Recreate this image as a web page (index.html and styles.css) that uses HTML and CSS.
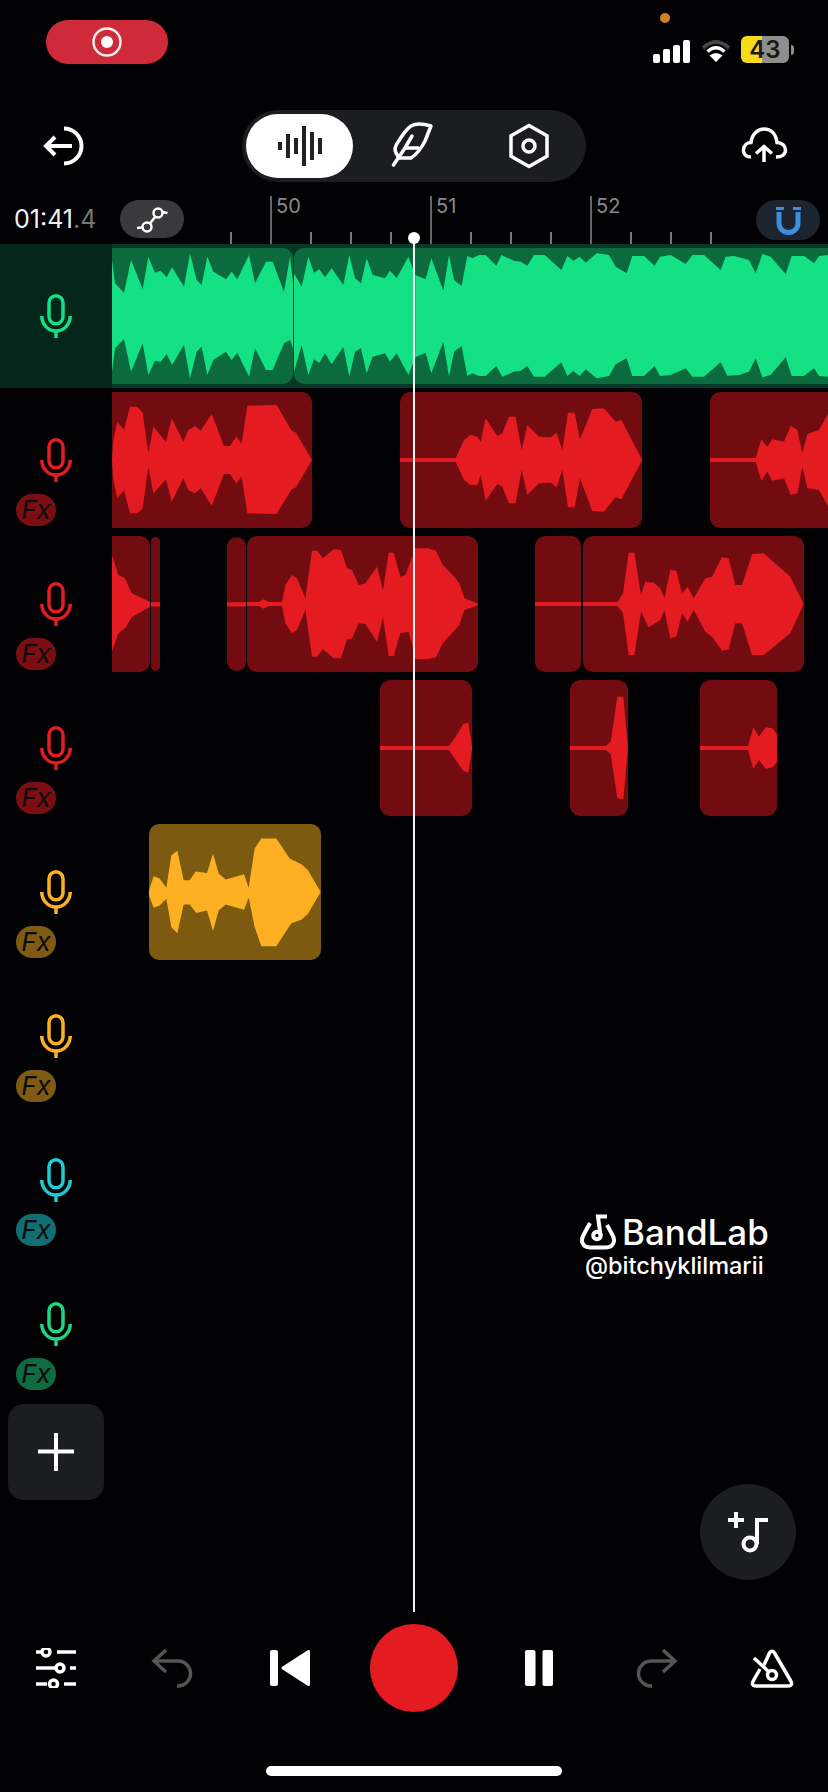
FILE: index.html
```html
<!DOCTYPE html>
<html lang="en">
<head>
  <meta charset="UTF-8">
  <title>BandLab Studio</title>
  <meta name="viewport" content="width=device-width, initial-scale=1">
  <link rel="stylesheet" href="styles.css">
</head>
<body>
  <svg class="defs" width="0" height="0">
    <symbol id="mic" viewBox="0 0 32 44">
      <rect x="9" y="1.75" width="14" height="28" rx="7" fill="none" stroke="currentColor" stroke-width="3.5"/>
      <path d="M1.75 22a14.25 15 0 0 0 28.5 0M16 37v7" fill="none" stroke="currentColor" stroke-width="3.5"/>
    </symbol>
    <symbol id="undo" viewBox="0 0 46 42">
      <path d="M16 3 4 14l12 11M4 14h24a12.5 12.5 0 0 1 0 25h-1" fill="none" stroke="currentColor" stroke-width="3.5"/>
    </symbol>
  </svg>

  <div class="app">
    <!-- status bar -->
    <div class="statusbar">
      <div class="rec-pill">
        <svg width="32" height="32" viewBox="0 0 32 32"><circle cx="16" cy="16" r="13.5" fill="none" stroke="#fbeeee" stroke-width="2.5"/><circle cx="16" cy="16" r="6" fill="#fff"/></svg>
      </div>
      <span class="cam-dot"></span>
      <div class="status-right">
        <div class="signal"><i class="s1"></i><i class="s2"></i><i class="s3"></i><i class="s4"></i></div>
        <svg class="wifi" width="32" height="26" viewBox="0 0 32 26">
          <path d="M3 11Q16-1 29 11" fill="none" stroke="#444" stroke-width="4"/>
          <path d="M7.5 14.5Q16 7 24.5 14.5" fill="none" stroke="#fff" stroke-width="3.5"/>
          <path d="M16 25 9.5 18.5Q16 13.5 22.5 18.5z" fill="#fff"/>
        </svg>
        <div class="battery"><span>43</span></div>
        <span class="battery-nub"></span>
      </div>
    </div>

    <!-- top toolbar -->
    <div class="toolbar">
      <svg width="44" height="44" viewBox="0 0 44 44" fill="none" stroke="#fff" stroke-width="4">
        <path d="M22 4.5a17.5 17.5 0 0 1 0 35M30 22H4M13 13l-9 9 9 9"/>
      </svg>
      <div class="seg">
        <div class="seg-item active">
          <svg width="44" height="40" viewBox="0 0 44 40" fill="#222">
            <rect x="0" y="16" width="4" height="8"/><rect x="8" y="8" width="4" height="24"/><rect x="16" y="12" width="4" height="16"/><rect x="24" y="0" width="4" height="40"/><rect x="32" y="6" width="4" height="28"/><rect x="40" y="12" width="4" height="16"/>
          </svg>
        </div>
        <div class="seg-item">
          <svg width="70" height="70" viewBox="0 0 70 70" fill="none" stroke="#fff" stroke-width="3.5" stroke-linecap="round" stroke-linejoin="round">
            <path d="M53 15C46 13 38 12 33 15 28 18 24 25 20 31 17 35 16 38 18 42L21 47H33C38 44 44 36 47 30Z"/>
            <path d="M15.5 54 27 37 34 25M27 37H40"/>
          </svg>
        </div>
        <div class="seg-item">
          <svg width="48" height="48" viewBox="0 0 48 48" fill="none" stroke="#fff" stroke-width="3.5">
            <path d="M24 3.5 42 13.8V34.2L24 44.5 6 34.2V13.8Z"/><circle cx="24" cy="24" r="6"/>
          </svg>
        </div>
      </div>
      <svg class="cloud" width="48" height="44" viewBox="0 0 48 44" fill="none" stroke="#fff" stroke-width="3.5">
        <path d="M11 33C5.5 33 3 29 3.5 25.5 4 21 7.5 18.5 11 18.5 12 10 18 5 24 5 31 5 36 10 37 18.5 42 18.5 45.5 22 45.5 26 45.5 30 42 33 36 33"/>
        <path d="M24 38V23M16 29.5l8-7 8 7"/>
      </svg>
    </div>

    <!-- time + ruler -->
    <div class="timebar">
      <div class="time">01:41<span>.4</span></div>
      <div class="pill auto">
        <svg width="64" height="38" viewBox="0 0 64 38" fill="none" stroke="#fff" stroke-width="2.5">
          <circle cx="38" cy="13" r="4.5"/><circle cx="27" cy="27" r="4.5"/><path d="M30 23.5l5-6.500M17 28l5.500-.5M42.500 12l5 1"/>
        </svg>
      </div>
      <div class="ruler">
        <div class="bar-mark"><span>50</span></div>
        <div class="bar-mark"><span>51</span></div>
        <div class="bar-mark last"><span>52</span></div>
      </div>
      <div class="pill magnet">
        <svg width="64" height="40" viewBox="0 0 64 40" fill="#3b8fe0">
          <rect x="20" y="7" width="8" height="3"/><rect x="37" y="7" width="8" height="3"/>
          <path d="M23 12v11a9.5 9.5 0 0 0 19 0V12" fill="none" stroke="#3b8fe0" stroke-width="5"/>
        </svg>
      </div>
    </div>

    <!-- tracks -->
    <div class="tracks">
      <div class="track armed t-green">
        <div class="head"><svg class="mic"><use href="#mic"/></svg></div>
        <div class="lane">
          <div class="clip cut-l" style="left:0;width:181px">
            <svg viewBox="336 24 543 408" preserveAspectRatio="none"><polygon points="336,60 345,130 372,158 393,60 428,148 445,50 465,98 482,92 500,112 516,82 552,140 570,40 590,120 605,135 622,50 640,95 678,118 695,95 712,118 747,45 765,130 798,65 818,65 852,155 870,50 879,130 879,325 870,300 852,310 818,390 798,390 765,325 747,410 712,338 695,360 678,335 640,360 622,405 605,320 590,335 570,415 552,315 516,375 500,342 482,365 465,362 445,405 428,310 393,395 372,297 345,325 336,395"/></svg>
          </div>
          <div class="clip cut-r" style="left:182px;width:534px">
            <svg viewBox="882 24 1602 408" preserveAspectRatio="none">
              <polygon points="882,100 905,140 925,50 942,98 958,88 975,112 995,85 1030,135 1048,45 1065,115 1083,130 1100,55 1118,105 1155,115 1170,92 1190,115 1225,50 1246,105 1246,352 1225,405 1190,340 1170,365 1155,340 1118,350 1100,400 1083,325 1065,335 1048,410 1030,320 995,372 975,340 958,368 942,358 925,405 905,315 882,395"/>
              <polygon transform="translate(1242 0)" points="4,105 35,118 52,55 88,152 105,45 120,120 143,138 160,48 175,55 195,45 215,45 247,77 262,45 300,62 320,65 340,77 360,45 392,45 442,90 460,48 478,62 497,50 515,68 548,40 585,45 605,80 638,100 655,48 690,48 722,77 738,50 770,45 815,72 835,45 870,45 920,90 935,50 960,48 1005,60 1025,100 1045,42 1070,50 1115,102 1133,48 1170,48 1200,70 1215,48 1242,45 1242,410 1215,408 1200,385 1170,408 1133,408 1115,352 1070,405 1045,412 1025,355 1005,395 975,405 940,407 920,367 870,410 835,410 815,385 770,405 738,408 722,378 690,408 655,408 638,355 605,373 585,408 548,415 515,388 497,408 478,393 460,408 442,367 392,410 360,410 340,378 320,392 300,395 265,410 247,378 215,408 195,408 175,400 160,408 143,318 120,335 105,410 88,305 52,400 35,338 4,352"/>
            </svg>
          </div>
        </div>
      </div>

      <div class="track t-red">
        <div class="head"><svg class="mic"><use href="#mic"/></svg><span class="fx">Fx</span></div>
        <div class="lane">
          <div class="clip cut-l" style="left:0;width:200px">
            <svg viewBox="336 456 600 408" preserveAspectRatio="none"><polygon points="336,660 340,600 352,545 372,570 390,500 412,500 428,518 445,640 460,560 498,605 515,535 550,605 565,570 585,558 602,572 635,522 672,618 690,618 708,590 725,610 742,497 830,495 875,572 888,578 936,660 888,742 875,748 830,822 742,820 725,710 708,730 690,702 672,702 635,797 602,745 585,760 565,750 550,715 515,785 498,718 460,760 445,680 428,805 412,820 390,820 372,750 352,775 340,720"/></svg>
          </div>
          <div class="clip" style="left:288px;width:242.3px">
            <svg viewBox="-42 456 727 408" preserveAspectRatio="none"><polygon points="-42,654 125,654 150,600 170,585 190,590 200,605 215,535 250,588 265,580 285,530 305,530 323,630 340,555 375,590 410,592 428,578 445,630 462,518 482,518 498,598 535,507 570,505 605,545 622,540 685,660 622,778 605,772 570,815 535,813 498,715 482,802 462,802 445,690 428,742 410,728 375,730 340,765 323,690 305,790 285,790 265,740 250,732 215,782 200,705 190,735 170,735 150,720 125,666 -42,666"/></svg>
          </div>
          <div class="clip" style="left:598px;width:160px">
            <svg viewBox="888 456 480 408" preserveAspectRatio="none"><polygon points="888,654 1025,654 1042,598 1060,620 1075,598 1110,605 1130,557 1150,570 1165,640 1180,582 1215,570 1240,525 1300,525 1300,795 1240,795 1215,750 1180,745 1165,680 1150,760 1130,765 1110,715 1075,722 1060,695 1042,722 1025,666 888,666"/></svg>
          </div>
        </div>
      </div>

      <div class="track t-red">
        <div class="head"><svg class="mic"><use href="#mic"/></svg><span class="fx">Fx</span></div>
        <div class="lane">
          <div class="clip cut-l" style="left:0;width:38px">
            <svg viewBox="336 18 114 408" preserveAspectRatio="none"><polygon points="336,75 355,135 375,145 395,190 450,215 450,230 395,262 375,295 355,310 336,365"/></svg>
          </div>
          <div class="clip sliver" style="left:39px;width:9.3px">
            <svg viewBox="452 26 28 390" preserveAspectRatio="none"><polygon points="452,216 480,216 480,228 452,228"/></svg>
          </div>
          <div class="clip sliver" style="left:115px;width:19px">
            <svg viewBox="681 26 57 390" preserveAspectRatio="none"><polygon points="681,216 738,216 738,228 681,228"/></svg>
          </div>
          <div class="clip" style="left:135px;width:230.7px">
            <svg viewBox="740 18 692 408" preserveAspectRatio="none">
              <polygon points="740,216 775,216 790,208 805,216 845,216 855,165 875,135 890,145 915,205 935,62 950,62 968,85 1000,58 1022,60 1040,115 1055,120 1075,165 1095,160 1130,110 1148,180 1165,68 1180,68 1200,140 1215,135 1246,55 1246,388 1225,305 1200,310 1180,378 1165,378 1148,262 1130,335 1095,282 1075,280 1055,325 1040,328 1022,385 1000,385 968,358 950,380 935,380 915,240 890,300 875,310 855,280 845,228 805,228 790,236 775,228 740,228"/>
              <polygon transform="translate(1242 0)" points="0,55 40,55 65,62 85,105 120,140 135,160 150,205 190,220 190,226 150,240 135,285 85,340 65,382 40,388 0,388"/>
            </svg>
          </div>
          <div class="clip" style="left:423.3px;width:46px">
            <svg viewBox="364 18 138 408" preserveAspectRatio="none"><polygon points="364,216 502,216 502,228 364,228"/></svg>
          </div>
          <div class="clip" style="left:471.3px;width:220.7px">
            <svg viewBox="508 18 662 408" preserveAspectRatio="none"><polygon points="508,216 612,216 628,190 645,68 662,68 682,195 695,155 720,158 740,175 752,205 770,120 788,122 805,190 822,170 840,205 875,145 895,140 925,82 945,85 965,165 985,165 1015,72 1050,70 1130,140 1170,222 1130,310 1050,375 1015,375 985,280 965,280 945,358 925,362 895,320 875,305 840,240 822,275 805,250 788,320 770,325 752,240 740,270 705,292 682,245 662,375 645,375 628,250 612,228 508,228"/></svg>
          </div>
        </div>
      </div>

      <div class="track t-red">
        <div class="head"><svg class="mic"><use href="#mic"/></svg><span class="fx">Fx</span></div>
        <div class="lane">
          <div class="clip" style="left:268px;width:92.3px">
            <svg viewBox="1140 450 277 408" preserveAspectRatio="none"><polygon points="1140,648 1347,648 1367,620 1390,582 1405,578 1417,654 1405,728 1390,722 1367,690 1347,660 1140,660"/></svg>
          </div>
          <div class="clip" style="left:458px;width:58px">
            <svg viewBox="468 450 174 408" preserveAspectRatio="none"><polygon points="468,648 575,648 590,635 610,500 628,500 642,654 628,808 610,805 590,672 575,660 468,660"/></svg>
          </div>
          <div class="clip" style="left:588px;width:77.3px">
            <svg viewBox="858 450 232 408" preserveAspectRatio="none"><polygon points="858,648 1002,648 1018,592 1035,620 1055,592 1075,595 1090,615 1090,695 1075,712 1055,717 1035,690 1018,717 1002,660 858,660"/></svg>
          </div>
        </div>
      </div>

      <div class="track t-amber">
        <div class="head"><svg class="mic"><use href="#mic"/></svg><span class="fx">Fx</span></div>
        <div class="lane">
          <div class="clip" style="left:37.3px;width:171.7px">
            <svg viewBox="448 42 515 406" preserveAspectRatio="none"><polygon points="448,240 462,198 480,205 500,232 515,135 533,122 552,210 570,210 588,184 622,188 640,130 657,190 678,208 733,192 747,232 765,115 785,85 830,85 870,145 905,162 925,180 963,245 925,310 905,328 875,338 830,407 785,407 765,350 747,262 733,298 678,282 657,300 640,362 622,300 590,308 570,282 552,282 533,368 515,350 500,265 480,285 462,292 448,255"/></svg>
          </div>
        </div>
      </div>

      <div class="track t-amber">
        <div class="head"><svg class="mic"><use href="#mic"/></svg><span class="fx">Fx</span></div>
        <div class="lane"></div>
      </div>
      <div class="track t-teal">
        <div class="head"><svg class="mic"><use href="#mic"/></svg><span class="fx">Fx</span></div>
        <div class="lane"></div>
      </div>
      <div class="track t-mint">
        <div class="head"><svg class="mic"><use href="#mic"/></svg><span class="fx">Fx</span></div>
        <div class="lane"></div>
      </div>
    </div>

    <div class="add-track">
      <svg width="36" height="38" viewBox="0 0 36 38" stroke="#fff" stroke-width="4"><path d="M18 0v38M0 18.5h36"/></svg>
    </div>

    <!-- transport -->
    <div class="transport">
      <svg width="40" height="40" viewBox="0 0 40 40" fill="none" stroke="#fff" stroke-width="3.5">
        <path d="M0 4h6M21 4h19M0 20h19M34 20h6M0 36h11M28 36h12"/>
        <circle cx="10" cy="4" r="4"/><circle cx="24" cy="20" r="4"/><circle cx="17.5" cy="36" r="4"/>
      </svg>
      <svg class="ghost" width="46" height="42"><use href="#undo"/></svg>
      <svg width="40" height="36" viewBox="0 0 40 36" fill="#fff">
        <rect width="8" height="36" rx="2"/>
        <path d="M13 18 38.5 1.5V34.5Z" stroke="#fff" stroke-width="3" stroke-linejoin="round"/>
      </svg>
      <div class="record"></div>
      <svg width="28" height="36" viewBox="0 0 28 36" fill="#fff">
        <rect width="10.5" height="36" rx="2"/><rect x="17.5" width="10.5" height="36" rx="2"/>
      </svg>
      <svg class="ghost flip" width="46" height="42"><use href="#undo"/></svg>
      <svg width="44" height="40" viewBox="0 0 44 40" fill="none" stroke="#fff" stroke-width="3.5" stroke-linejoin="round">
        <path d="M14 17 19.5 5Q22 1.5 24.5 5L40.500 32.500Q43.500 38 38 38H6Q.5 38 3.500 32.500L10 21"/>
        <path d="M4 10 19 24"/><circle cx="22" cy="27" r="4.5"/>
      </svg>
    </div>

    <div class="home-bar"></div>

    <!-- overlays -->
    <div class="playhead"></div>
    <div class="watermark">
      <div class="wm-logo">
        <svg width="36" height="36" viewBox="0 0 36 36" fill="none" stroke="#fff" stroke-width="4">
          <path d="M10 9 3.500 21C0 27.500 3 33.500 10 33.500H26C33 33.500 36 27.500 32.500 21L27 11"/>
          <circle cx="17" cy="21.500" r="3.800"/><path d="M20.500 21.500 18 2.500H27"/>
        </svg>
        <span>BandLab</span>
      </div>
      <div class="wm-user">@bitchyklilmarii</div>
    </div>
    <div class="fab">
      <svg width="96" height="96" viewBox="0 0 96 96" fill="none" stroke="#fff" stroke-width="4">
        <path d="M36 28v16M28 36h16M57 60V36h11"/><circle cx="50" cy="60" r="6.5"/>
      </svg>
    </div>
  </div>
</body>
</html>
```

FILE: styles.css
```css
:root {
  --bg: #020204;
  --panel: #1c1d21;
  --green: #14e084;
  --green-dark: #0b6b3f;
  --red: #e41b20;
  --red-dark: #720c10;
  --amber: #fdb022;
  --amber-dark: #7c5a10;
}
* {
  box-sizing: border-box;
}
body {
  margin: 0;
  background: var(--bg);
  font-family: Inter, 'Noto Sans', sans-serif;
}
.defs {
  position: absolute;
}
svg {
  display: block;
  flex: none;
}
.app {
  position: relative;
  width: 828px;
  height: 1792px;
  overflow: hidden;
  display: flex;
  flex-direction: column;
  background: var(--bg);
}

/* status bar */
.statusbar {
  height: 110px;
  padding: 20px 34px 0 46px;
  display: flex;
  justify-content: space-between;
  align-items: flex-start;
}
.rec-pill {
  width: 122px;
  height: 44px;
  border-radius: 22px;
  background: #cf2a3a;
  display: flex;
  align-items: center;
  justify-content: center;
}
.cam-dot {
  position: absolute;
  left: 660px;
  top: 13px;
  width: 10px;
  height: 10px;
  border-radius: 50%;
  background: #d08120;
}
.status-right {
  margin-top: 16px;
  height: 27px;
  display: flex;
  align-items: center;
}
.signal {
  display: flex;
  align-items: flex-end;
  gap: 3px;
  height: 23px;
  margin-top: 3px;
}
.signal i {
  width: 7px;
  border-radius: 2px;
  background: #fff;
}
.signal .s1 { height: 9px; }
.signal .s2 { height: 14px; }
.signal .s3 { height: 18px; }
.signal .s4 { height: 23px; }
.wifi {
  margin: 0 9px 0 10px;
}
.battery {
  width: 48px;
  height: 27px;
  border-radius: 6px;
  background: linear-gradient(90deg, #f8da1c 0 21px, #8e8e8e 21px);
  display: flex;
  align-items: center;
  justify-content: center;
  font-size: 24px;
  font-weight: 600;
  color: #1b1a10;
}
.battery-nub {
  width: 3px;
  height: 10px;
  margin-left: 2px;
  border-radius: 0 3px 3px 0;
  background: #8e8e8e;
}

/* toolbar */
.toolbar {
  height: 72px;
  padding: 0 40px 0 42px;
  display: flex;
  align-items: center;
}
.seg {
  width: 344px;
  height: 72px;
  margin-left: 156px;
  padding: 4px;
  border-radius: 36px;
  background: var(--panel);
  display: flex;
}
.seg-item {
  flex: none;
  width: 120px;
  display: flex;
  align-items: center;
  justify-content: center;
}
.seg-item:last-child {
  width: 112px;
}
.seg-item.active {
  width: 107px;
  border-radius: 32px;
  background: #fff;
}
.cloud {
  margin-left: auto;
}

/* time + ruler */
.timebar {
  height: 48px;
  margin-top: 14px;
  padding-left: 14px;
  display: flex;
  align-items: flex-start;
}
.time {
  width: 106px;
  height: 46px;
  line-height: 46px;
  font-size: 25px;
  font-weight: 400;
  color: #f1f1f1;
}
.time span {
  color: #777;
}
.pill {
  flex: none;
  width: 64px;
  height: 38px;
  margin-top: 4px;
  border-radius: 19px;
  background: #3a3a3d;
}
.ruler {
  flex: none;
  width: 482px;
  height: 48px;
  margin-left: 46px;
  padding-left: 40px;
  display: flex;
  background: repeating-linear-gradient(90deg, #777 0 2px, transparent 2px 40px) 0 100% / 100% 12px no-repeat;
}
.bar-mark {
  flex: none;
  width: 160px;
  padding-left: 4px;
  border-left: 2px solid #666;
  font-size: 20px;
  line-height: 20px;
  color: #888;
}
.bar-mark.last {
  width: 122px;
}
.bar-mark span {
  display: block;
}
.magnet {
  height: 40px;
  margin-left: 44px;
  border-radius: 20px;
  background: #1c2430;
}

/* tracks */
.track {
  height: 144px;
  display: flex;
}
.head {
  width: 112px;
  padding: 50px 0 0 16px;
}
.mic {
  width: 32px;
  height: 44px;
  margin-left: 24px;
  color: var(--wave);
}
.fx {
  display: block;
  width: 40px;
  height: 32px;
  margin-top: 12px;
  border-radius: 16px;
  background: var(--fx);
  text-align: center;
  font-size: 26px;
  font-style: italic;
  line-height: 32px;
  color: #0c0c0c;
}
.lane {
  position: relative;
  flex: 1;
  overflow: hidden;
}
.clip {
  position: absolute;
  top: 4px;
  height: 136px;
  border-radius: 10px;
  overflow: hidden;
  background: var(--clip);
}
.clip svg {
  width: 100%;
  height: 100%;
  fill: var(--wave);
}
.clip.cut-l {
  border-radius: 0 10px 10px 0;
}
.clip.cut-r {
  border-radius: 10px 0 0 10px;
}
.clip.sliver {
  top: 5px;
  height: 134px;
}
.t-green {
  --wave: var(--green);
  --clip: var(--green-dark);
}
.t-red {
  --wave: var(--red);
  --clip: var(--red-dark);
  --fx: #7b0e12;
}
.t-amber {
  --wave: var(--amber);
  --clip: var(--amber-dark);
  --fx: #7e5a12;
}
.t-teal {
  --wave: #20ccd0;
  --fx: #0f6f74;
}
.t-mint {
  --wave: #1ed67e;
  --fx: #0f6b40;
}
.armed .head {
  background: #05261a;
}
.armed .lane {
  background: #08382a;
}

.add-track {
  width: 96px;
  height: 96px;
  margin: 8px 0 0 8px;
  border-radius: 16px;
  background: var(--panel);
  display: flex;
  align-items: center;
  justify-content: center;
}

/* transport */
.transport {
  height: 88px;
  margin-top: auto;
  display: grid;
  grid-template-columns: 112px 122px 112px 136px 114px 120px 112px;
  align-items: center;
  justify-items: center;
}
.ghost {
  color: #555;
}
.flip {
  transform: scaleX(-1);
}
.record {
  width: 88px;
  height: 88px;
  border-radius: 50%;
  background: var(--red);
}
.home-bar {
  width: 296px;
  height: 10px;
  margin: 54px 0 16px 266px;
  border-radius: 5px;
  background: #fff;
}

/* overlays */
.playhead {
  position: absolute;
  left: 413px;
  top: 238px;
  width: 2px;
  height: 1374px;
  background: #f4f4f4;
}
.playhead::before {
  content: "";
  position: absolute;
  left: -5px;
  top: -6px;
  width: 12px;
  height: 12px;
  border-radius: 50%;
  background: #fff;
}
.watermark {
  position: absolute;
  left: 580px;
  top: 1214px;
  color: #fff;
}
.wm-logo {
  display: flex;
  align-items: center;
  gap: 6px;
  height: 36px;
  font-size: 35px;
  font-weight: 500;
}
.wm-user {
  margin: 1px 0 0 5px;
  font-size: 23.5px;
  font-weight: 500;
  line-height: 30px;
}
.fab {
  position: absolute;
  left: 700px;
  top: 1484px;
  width: 96px;
  height: 96px;
  border-radius: 50%;
  background: var(--panel);
}
```
